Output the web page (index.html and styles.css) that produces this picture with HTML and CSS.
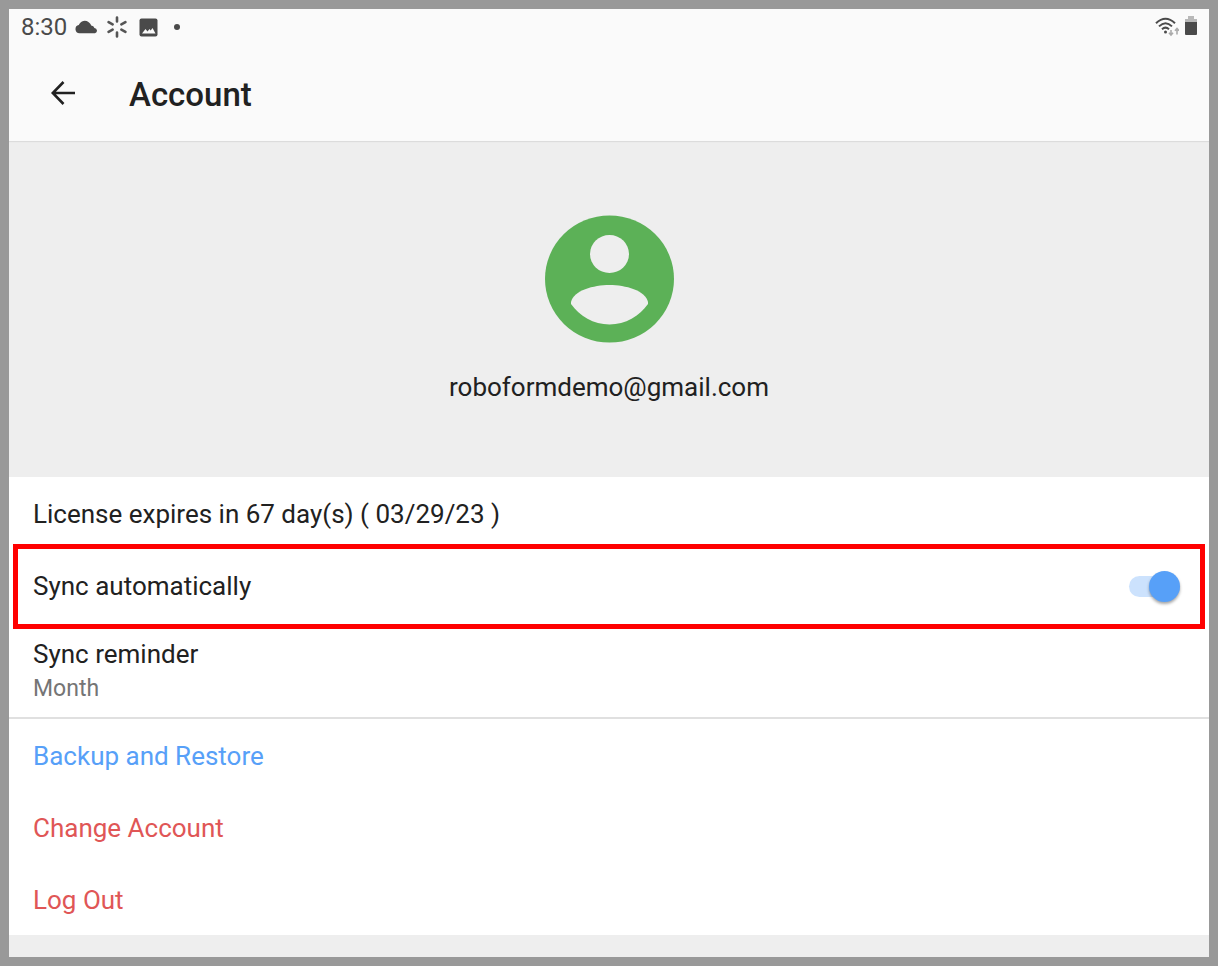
FILE: index.html
```html
<!DOCTYPE html>
<html lang="en">
<head>
    <meta charset="UTF-8">
    <meta name="viewport" content="width=device-width, initial-scale=1.0">
    <title>Account</title>
    <link rel="stylesheet" href="styles.css">
</head>
<body>
    <header class="top">
        <div class="status-bar">
            <span class="time">8:30</span>
            <svg class="cloud" width="23" height="14" viewBox="0 0 23 14">
                <path d="M4.500 13.300A4.200 4.200 0 0 1 3.800 5 A6.300 6.300 0 0 1 14.300 2.800Q15.700 4 16.200 5.600Q18.800 5.800 19.400 8A2.700 2.700 0 0 1 20 13.300Z" fill="#4a4a4a"/>
            </svg>
            <svg class="spark" width="20" height="22" viewBox="0 0 20 22" stroke="#555" stroke-width="2.600" stroke-linecap="round">
                <path d="M10 1.500v4M10 16.500v4M1.600 6.200l4 2.200M14.400 13.600l4 2.200M1.600 15.800l4-2.200M14.400 8.400l4-2.200"/>
            </svg>
            <svg class="photo" width="19" height="19" viewBox="0 0 19 19">
                <rect x="0.500" y="0.500" width="18" height="18" rx="2" fill="#4a4a4a"/>
                <path d="M3 15.500l3.500-4.500 2 2.500 2-2.500 1.200 1.500 1.800-2.500 3 5.500z" fill="#fafafa"/>
            </svg>
            <svg class="dot" width="6" height="6" viewBox="0 0 6 6">
                <circle cx="3" cy="3" r="3" fill="#4a4a4a"/>
            </svg>
            <svg class="wifi" width="24" height="20" viewBox="0 0 24 20" fill="none" stroke-width="2">
                <path d="M1 6.200Q10.500-2.800 20 6.200M4 9.400Q10.500 3 17 9.400M7 12.300Q10.500 9 14 12.300" stroke="#4a4a4a"/>
                <circle cx="10.500" cy="15" r="1.500" fill="#4a4a4a"/>
                <path d="M16 13v5M14 15.700l2 2.300 2-2.300M22 17.500v-6M20 13.800l2-2.300 2 2.300" stroke="#aaa" stroke-width="1.600"/>
            </svg>
            <svg class="battery" width="12" height="19" viewBox="0 0 12 19">
                <path d="M3 0h6v3h3v4H0V3h3z" fill="#b8b8b8"/>
                <path d="M0 6h12v12q0 1-1 1H1q-1 0-1-1z" fill="#4a4a4a"/>
            </svg>
        </div>
        <div class="app-bar">
            <button class="back" type="button" aria-label="Back">
                <svg width="26" height="24" viewBox="0 0 26 24" fill="none" stroke="#212121" stroke-width="2.600">
                    <path d="M25 12H3M13.500 1L2.800 12l10.700 11"/>
                </svg>
            </button>
            <h1 class="title">Account</h1>
        </div>
    </header>

    <main>
        <section class="profile">
            <svg class="avatar" width="130" height="128" viewBox="0 0 130 128">
                <ellipse cx="65.500" cy="64" rx="64.500" ry="63.500" fill="#5cb157"/>
                <ellipse cx="65.500" cy="39" rx="19.500" ry="19" fill="#eee"/>
                <path d="M27 87C29.500 75.500 49.500 70 65.500 70s36 5.500 38.500 17v2C95.500 101 81.500 109.500 65.500 109.500S35.500 101 27 89z" fill="#eee"/>
            </svg>
            <div class="email">roboformdemo@gmail.com</div>
        </section>

        <section class="settings">
            <div class="row">License expires in 67 day(s) ( 03/29/23 )</div>
            <div class="row highlight">
                <label for="syncAuto">Sync automatically</label>
                <input class="switch" type="checkbox" id="syncAuto" checked>
            </div>
            <button class="row reminder" type="button">
                <span>Sync reminder</span>
                <span class="value">Month</span>
            </button>
        </section>

        <nav class="actions">
            <a class="row link" href="#backup">Backup and Restore</a>
            <a class="row danger" href="#change">Change Account</a>
            <a class="row danger" href="#logout">Log Out</a>
        </nav>
    </main>
</body>
</html>
```
FILE: styles.css
```css
* {
    box-sizing: border-box;
}
body {
    margin: 0;
    min-height: 100vh;
    border: 9px solid #999;
    background-color: #eee;
    color: #212121;
    font-family: Roboto, sans-serif;
    font-size: 26px;
    line-height: 32px;
}
.top {
    background-color: #fafafa;
    box-shadow: 0 1px 1px #dcdcdc;
}

/* Status bar */
.status-bar {
    display: flex;
    align-items: center;
    height: 36px;
    padding: 0 12px;
}
.time {
    margin-right: 8px;
    color: #4a4a4a;
    font-size: 24px;
}
.spark {
    margin-left: 9px;
}
.photo {
    margin-left: 12px;
}
.dot {
    margin-left: 16px;
}
.wifi {
    margin-left: auto;
}
.battery {
    margin: 0 0 3px 6px;
}

.app-bar {
    display: flex;
    align-items: center;
    height: 96px;
    padding: 0 24px;
}
.back {
    display: flex;
    padding: 17px;
    border: none;
    background: none;
    cursor: pointer;
}
.title {
    margin: 0 0 0 36px;
    padding-top: 4px;
    font-size: 33px;
    font-weight: 500;
    line-height: 40px;
}

/* Profile */
.profile {
    display: flex;
    flex-direction: column;
    align-items: center;
    gap: 28px;
    padding: 74px 24px;
}

/* Rows */
.settings,
.actions {
    background-color: #fff;
}
.actions {
    border-top: 2px solid #e0e0e0;
}
.row {
    display: flex;
    align-items: center;
    justify-content: space-between;
    width: 100%;
    min-height: 72px;
    padding: 2px 24px 0;
    border: none;
    background: none;
    color: #212121;
    font: inherit;
    text-align: left;
    text-decoration: none;
}
.link {
    color: #57a0f8;
}
.danger {
    color: #e05656;
}
.reminder {
    flex-direction: column;
    align-items: flex-start;
    justify-content: center;
    gap: 3px;
    min-height: 96px;
    padding-top: 5px;
    cursor: pointer;
}
.value {
    color: #757575;
    font-size: 23px;
}

/* Red frame lies over the neighbouring rows */
.highlight {
    position: relative;
    padding-right: 29px;
}
.highlight::after {
    content: "";
    position: absolute;
    inset: -5px 4px -8px 4px;
    border: 5px solid #f00;
    pointer-events: none;
}

.switch {
    appearance: none;
    display: flex;
    align-items: center;
    width: 51px;
    height: 21px;
    margin: 0;
    border-radius: 11px;
    background-color: #ddd;
    cursor: pointer;
}
.switch::before {
    content: "";
    width: 31px;
    height: 31px;
    border-radius: 50%;
    background-color: #fff;
    box-shadow: 0 2px 3px rgba(0, 0, 0, 0.35);
}
.switch:checked {
    justify-content: flex-end;
    background-color: #cce2fd;
}
.switch:checked::before {
    background-color: #57a0f8;
}
```
